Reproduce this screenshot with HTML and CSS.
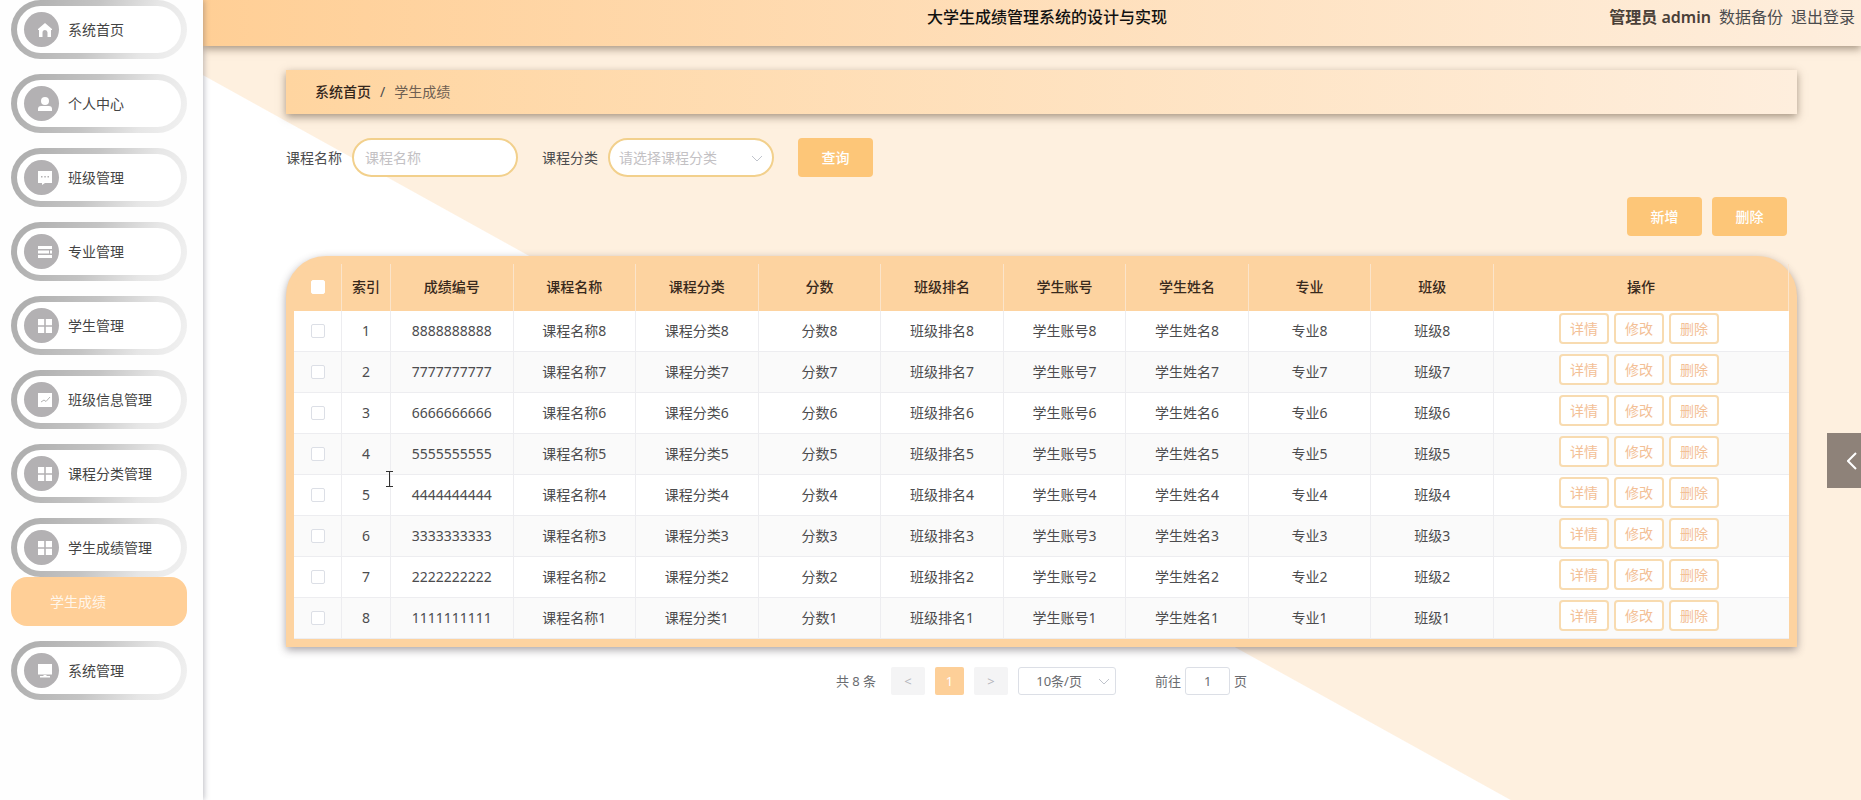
FILE: index.html
```html
<!DOCTYPE html>
<html lang="zh-CN">
<head>
  <meta charset="UTF-8" />
  <meta name="viewport" content="width=device-width, initial-scale=1.0" />
  <title>大学生成绩管理系统的设计与实现</title>
  <link rel="stylesheet" href="styles.css">
</head>
<body>
  <!-- Shared icon shapes -->
  <svg class="sprite" aria-hidden="true">
    <symbol id="i-home" viewBox="0 0 14 14"><path d="M7 0 14 6v1h-1v7H9.500V9.500a2.500 2.500 0 0 0-5 0V14H1V7H0V6z"/></symbol>
    <symbol id="i-user" viewBox="0 0 14 14"><circle cx="7" cy="4" r="4"/><path d="M0 14v-2c0-2 1-3 3-3h8c2 0 3 1 3 3v2z"/></symbol>
    <symbol id="i-chat" viewBox="0 0 14 14"><path fill-rule="evenodd" d="M0 0h14v12H7l-3 2v-2H0zM3 5v1.500h1.500V5zm3.300 0v1.500h1.500V5zm3.200 0v1.500H11V5z"/></symbol>
    <symbol id="i-list" viewBox="0 0 14 14"><path d="M0 1h14v3H0zM0 5.500h11v3H0zM12 5.500h2v3h-2zM0 10h14v3H0z"/></symbol>
    <symbol id="i-grid" viewBox="0 0 14 14"><path d="M0 0h6.200v6.200H0zM7.800 0H14v6.200H7.800zM0 7.800h6.200V14H0zM7.800 7.800H14V14H7.800z"/></symbol>
    <symbol id="i-chart" viewBox="0 0 14 14"><path d="M0 0h14v14H0z"/><path fill="none" stroke="#b3b3b3" d="m3 9 3-2 2 1.500L12 4"/></symbol>
    <symbol id="i-screen" viewBox="0 0 14 14"><path d="M0 0h14v10.500H0zM2 12h3l1-1h2l1 1h3v1.500H2z"/></symbol>
  </svg>

  <aside class="sidebar">
    <ul class="menu">
      <li><a class="menu-item" href="#"><span class="menu-icon"><svg><use href="#i-home"/></svg></span>系统首页</a></li>
      <li><a class="menu-item" href="#"><span class="menu-icon"><svg><use href="#i-user"/></svg></span>个人中心</a></li>
      <li><a class="menu-item" href="#"><span class="menu-icon"><svg><use href="#i-chat"/></svg></span>班级管理</a></li>
      <li><a class="menu-item" href="#"><span class="menu-icon"><svg><use href="#i-list"/></svg></span>专业管理</a></li>
      <li><a class="menu-item" href="#"><span class="menu-icon"><svg><use href="#i-grid"/></svg></span>学生管理</a></li>
      <li><a class="menu-item" href="#"><span class="menu-icon"><svg><use href="#i-chart"/></svg></span>班级信息管理</a></li>
      <li><a class="menu-item" href="#"><span class="menu-icon"><svg><use href="#i-grid"/></svg></span>课程分类管理</a></li>
      <li>
        <a class="menu-item" href="#"><span class="menu-icon"><svg><use href="#i-grid"/></svg></span>学生成绩管理</a>
        <a class="submenu-item" href="#">学生成绩</a>
      </li>
      <li><a class="menu-item" href="#"><span class="menu-icon"><svg><use href="#i-screen"/></svg></span>系统管理</a></li>
    </ul>
  </aside>

  <div class="page">
    <header class="topbar">
      <h1>大学生成绩管理系统的设计与实现</h1>
      <nav class="user-nav">
        <strong>管理员 admin</strong>
        <a href="#">数据备份</a>
        <a href="#">退出登录</a>
      </nav>
    </header>

    <main class="content">
      <nav class="breadcrumb">
        <a href="#">系统首页</a>
        <span>/</span>
        <span class="current">学生成绩</span>
      </nav>

      <form class="search">
        <div class="field">
          <label for="course-name">课程名称</label>
          <input class="box" id="course-name" type="text" placeholder="课程名称">
        </div>
        <div class="field">
          <label for="course-type">课程分类</label>
          <div class="select-wrap">
            <select class="box" id="course-type">
              <option>请选择课程分类</option>
            </select>
            <svg class="arrow" viewBox="0 0 12 12"><path d="m1 4 5 5 5-5"/></svg>
          </div>
        </div>
        <button class="btn" type="button">查询</button>
      </form>

      <div class="toolbar">
        <button class="btn" type="button">新增</button>
        <button class="btn" type="button">删除</button>
      </div>

      <div class="table-box">
        <table>
          <colgroup>
            <col class="col-check">
            <col class="col-index">
            <col span="9">
            <col class="col-actions">
          </colgroup>
          <thead>
            <tr>
              <th><input type="checkbox" aria-label="全选"></th>
              <th>索引</th>
              <th>成绩编号</th>
              <th>课程名称</th>
              <th>课程分类</th>
              <th>分数</th>
              <th>班级排名</th>
              <th>学生账号</th>
              <th>学生姓名</th>
              <th>专业</th>
              <th>班级</th>
              <th>操作</th>
            </tr>
          </thead>
          <tbody id="rows"></tbody>
        </table>
      </div>

      <div class="pagination">
        <span>共 8 条</span>
        <button class="pager" type="button" disabled>&lt;</button>
        <button class="pager active" type="button">1</button>
        <button class="pager" type="button" disabled>&gt;</button>
        <div class="select-wrap">
          <select class="page-size" aria-label="每页条数">
            <option>10条/页</option>
          </select>
          <svg class="arrow" viewBox="0 0 12 12"><path d="m1 4 5 5 5-5"/></svg>
        </div>
        <div class="jump">
          <label for="jump-page">前往</label>
          <input id="jump-page" type="text" value="1">
          <span>页</span>
        </div>
      </div>
    </main>
  </div>

  <button class="drawer-tab" type="button" aria-label="展开">
    <svg viewBox="0 0 10 18"><path d="M9 1 1 9l8 8"/></svg>
  </button>

  <!-- Text pointer resting on the table -->
  <svg class="pointer" viewBox="0 0 9 18" aria-hidden="true"><path d="M1 1.500h7M4.500 1.500v15M1 16.500h7"/></svg>

  <script>
    const rows = document.getElementById('rows');
    const names = ['课程名称', '课程分类', '分数', '班级排名', '学生账号', '学生姓名', '专业', '班级'];

    for (let i = 1; i <= 8; i++) {
      const n = 9 - i;
      const tr = document.createElement('tr');
      tr.innerHTML = `
        <td><input type="checkbox" aria-label="选择第${i}行"></td>
        <td>${i}</td>
        <td>${String(n).repeat(10)}</td>
        ${names.map(name => `<td>${name}${n}</td>`).join('')}
        <td class="actions">
          <button type="button">详情</button><button type="button">修改</button><button type="button">删除</button>
        </td>`;
      rows.appendChild(tr);
    }
  </script>
</body>
</html>
```
FILE: styles.css
```css
* {
  box-sizing: border-box;
}
body {
  margin: 0;
  display: flex;
  min-height: 100vh;
  font-family: "Noto Sans", "Noto Sans CJK SC", sans-serif;
  font-size: 14px;
  line-height: 20px;
  color: #4c4c4e;
  background-color: #fff;
}
a {
  color: inherit;
  text-decoration: none;
}
button, input, select {
  font: inherit;
  color: inherit;
}
.sprite {
  position: absolute;
  width: 0;
  height: 0;
}

/* ---------- Sidebar ---------- */
.sidebar {
  flex: 0 0 203px;
  padding: 0 16px 0 11px;
  background-color: #fefefe;
  box-shadow: 1px 0 6px rgba(60, 60, 80, 0.35);
  z-index: 1;
}
.menu {
  display: flex;
  flex-direction: column;
  gap: 15px;
  margin: 0;
  padding: 0;
  list-style: none;
}
.menu-item {
  display: flex;
  align-items: center;
  gap: 9px;
  height: 59px;
  padding-left: 7px;
  border: 6px solid transparent;
  border-radius: 30px;
  background:
    linear-gradient(#fff, #fff) padding-box,
    linear-gradient(110deg, #b0b0b0 10%, #c4c4c4 45%, #e6e6e6 75%, #f2f2f2) border-box;
  color: #444;
}
.menu-icon {
  display: flex;
  align-items: center;
  justify-content: center;
  width: 35px;
  height: 35px;
  padding-left: 7px;
  border-radius: 50%;
  background-color: #b3b1b3;
}
.menu-icon svg {
  width: 14px;
  height: 14px;
  fill: #fff;
}
.submenu-item {
  display: flex;
  align-items: center;
  height: 49px;
  padding-left: 39px;
  border-radius: 16px;
  background-color: #ffcf97;
  color: #fff6ea;
}

/* ---------- Page and top bar ---------- */
.page {
  flex: 1;
  min-width: 0;
  background: linear-gradient(209deg, #fef0df calc(58% - 3px), #fff calc(58% - 2px));
}
.topbar {
  display: grid;
  grid-template-columns: 1fr auto 1fr;
  padding: 0 6px 12px 36px;
  font-size: 16px;
  line-height: 34px;
  background: linear-gradient(90deg, #ffcf96, #feeedd);
  box-shadow: 0 3px 8px rgba(80, 60, 40, 0.5);
}
.topbar h1 {
  grid-column: 2;
  margin: 0;
  font-size: 16px;
  font-weight: 500;
  color: #111;
}
.user-nav {
  display: flex;
  justify-content: flex-end;
  gap: 8px;
}
.user-nav strong {
  font-weight: 600;
  color: #4a4038;
}
.content {
  padding: 24px 64px 24px 83px;
}
.breadcrumb {
  display: flex;
  align-items: center;
  gap: 9px;
  height: 44px;
  padding: 0 29px;
  background: linear-gradient(90deg, #ffd5a0, #feeedd);
  box-shadow: 0 3px 8px rgba(80, 60, 40, 0.5);
}
.breadcrumb a {
  font-weight: 500;
  color: #33261c;
}
.breadcrumb .current {
  color: #6f6052;
}

/* ---------- Search form ---------- */
.search {
  display: flex;
  gap: 24px;
  margin-top: 24px;
}
.field {
  display: flex;
  align-items: center;
  gap: 10px;
}
.box {
  display: block;
  width: 166px;
  height: 39px;
  padding: 0 11px;
  border: 2px solid #f2d08c;
  border-radius: 20px;
  background-color: #fff;
  appearance: none;
}
.box::placeholder {
  color: #c3c1c4;
  opacity: 1;
}
select.box {
  padding-left: 9px;
  color: #c3c1c4;
}
.select-wrap {
  position: relative;
}
.arrow {
  position: absolute;
  top: 50%;
  right: 11px;
  width: 12px;
  height: 12px;
  margin-top: -6px;
  fill: none;
  stroke: #c0c4cc;
  pointer-events: none;
}
.btn {
  width: 75px;
  height: 39px;
  padding: 0;
  border: 0;
  border-radius: 4px;
  background-color: #fdc678;
  font-weight: 500;
  color: #fff;
}
.toolbar {
  display: flex;
  justify-content: flex-end;
  gap: 10px;
  margin: 20px 10px 20px 0;
}

/* ---------- Table ---------- */
.table-box {
  border: 8px solid #fdd3a0;
  border-radius: 40px 40px 0 0;
  background-color: #fdd3a0;
  box-shadow: 0 3px 8px rgba(60, 50, 60, 0.45);
}
table {
  width: 100%;
  table-layout: fixed;
  border-collapse: separate;
  border-spacing: 0;
  text-align: center;
}
.col-check {
  width: 48px;
}
.col-index {
  width: 49px;
}
.col-actions {
  width: 295px;
}
th {
  height: 47px;
  padding: 0 0 2px;
  border-right: 1px solid #fbe4ca;
  font-weight: 500;
  color: #38291c;
}
td {
  height: 41px;
  padding: 0;
  border-right: 1px solid #ededf0;
  border-bottom: 1px solid #ededf0;
  background-color: #fff;
}
td:last-child {
  border-right: 0;
}
tbody tr:nth-child(even) td {
  background-color: #fafafa;
}
input[type="checkbox"] {
  display: block;
  width: 14px;
  height: 14px;
  margin: 0 auto;
  border: 1px solid #dcdfe6;
  border-radius: 2px;
  background-color: #fff;
  appearance: none;
}
th input[type="checkbox"] {
  border-color: #fff;
}
.actions {
  padding: 2px 0;
  font-size: 0;
}
.actions button {
  width: 50px;
  height: 31px;
  margin: 0 5px 5px 0;
  padding: 0;
  border: 2px solid #f8dbb0;
  border-radius: 4px;
  background-color: #fff;
  font-size: 14px;
  vertical-align: top;
  color: #f3c096;
}

/* ---------- Pagination ---------- */
.pagination {
  display: flex;
  align-items: center;
  justify-content: center;
  gap: 10px;
  margin-top: 20px;
  font-size: 13px;
  color: #6a6c70;
}
.pagination > span {
  margin-right: 5px;
}
.pager {
  width: 34px;
  height: 28px;
  padding: 0;
  border: 0;
  border-radius: 2px;
  background-color: #f4f4f5;
  color: #b4b6bc;
}
.pager.active {
  width: 29px;
  background-color: #fdcf98;
  color: #fff;
}
.page-size {
  display: block;
  width: 98px;
  height: 28px;
  padding: 0 16px 0 0;
  border: 1px solid #dcdfe6;
  border-radius: 3px;
  background-color: #fff;
  text-align: center;
  text-align-last: center;
  appearance: none;
}
.pagination .arrow {
  right: 6px;
}
.jump {
  display: flex;
  align-items: center;
  gap: 4px;
  margin-left: 29px;
}
.jump input {
  width: 45px;
  height: 28px;
  padding: 0;
  border: 1px solid #dcdfe6;
  border-radius: 3px;
  background-color: #fff;
  text-align: center;
}

/* ---------- Overlays ---------- */
.drawer-tab {
  position: fixed;
  top: 433px;
  right: 0;
  display: flex;
  align-items: center;
  justify-content: flex-end;
  width: 34px;
  height: 55px;
  padding: 0 4px 0 0;
  border: 0;
  background-color: #8e8279;
}
.drawer-tab svg {
  width: 10px;
  height: 18px;
  fill: none;
  stroke: #fff;
  stroke-width: 2;
}
.pointer {
  position: absolute;
  top: 470px;
  left: 385px;
  width: 9px;
  height: 18px;
  fill: none;
  stroke: #333;
  z-index: 2;
}
```
